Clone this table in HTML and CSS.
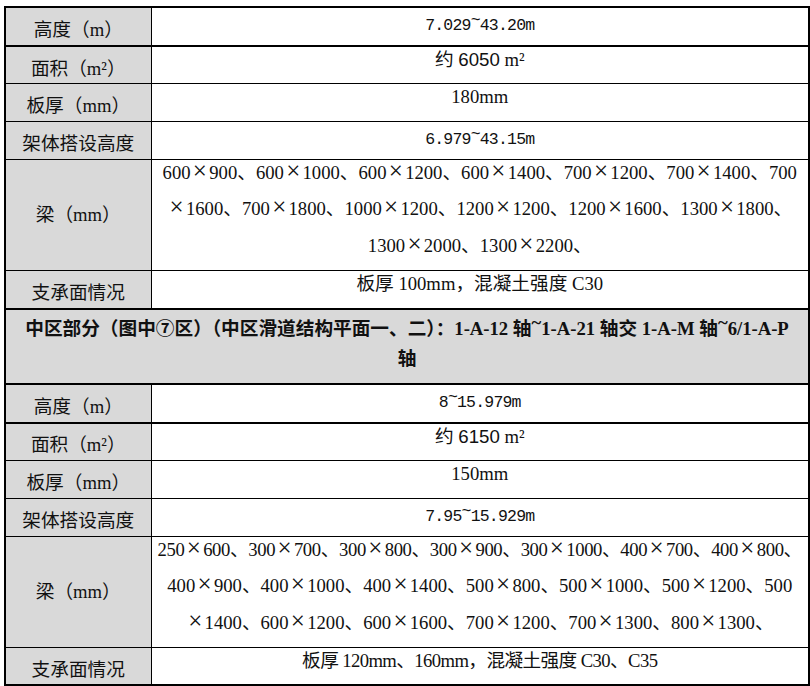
FILE: index.html
```html
<!DOCTYPE html>
<html lang="zh-CN">
<head>
<meta charset="utf-8">
<title>中区部分参数表</title>
<link rel="stylesheet" href="styles.css">
</head>
<body>
<div class="page">
<table class="spec">
  <colgroup><col class="c-label"><col class="c-value"></colgroup>
  <tr class="thick">
    <th class="label">高度（m）</th>
    <td class="value"><span class="line"><span class="mono">7.029<span class="tl">~</span>43.20m</span></span></td>
  </tr>
  <tr>
    <th class="label">面积（m²）</th>
    <td class="value"><span class="line">约 <span class="sans">6050</span> m²</span></td>
  </tr>
  <tr>
    <th class="label">板厚（mm）</th>
    <td class="value"><span class="line">180mm</span></td>
  </tr>
  <tr>
    <th class="label">架体搭设高度</th>
    <td class="value"><span class="line"><span class="mono">6.979<span class="tl">~</span>43.15m</span></span></td>
  </tr>
  <tr>
    <th class="label label-tall">梁（mm）</th>
    <td class="value">
      <span class="line">600<span class="x">×</span>900、600<span class="x">×</span>1000、600<span class="x">×</span>1200、600<span class="x">×</span>1400、700<span class="x">×</span>1200、700<span class="x">×</span>1400、700</span>
      <span class="line"><span class="x">×</span>1600、700<span class="x">×</span>1800、1000<span class="x">×</span>1200、1200<span class="x">×</span>1200、1200<span class="x">×</span>1600、1300<span class="x">×</span>1800、</span>
      <span class="line">1300<span class="x">×</span>2000、1300<span class="x">×</span>2200、</span>
    </td>
  </tr>
  <tr class="thick">
    <th class="label">支承面情况</th>
    <td class="value"><span class="line">板厚 100mm，混凝土强度 C30</span></td>
  </tr>
  <tr class="thick">
    <td class="section" colspan="2">
      <span class="line">中区部分（图中⑦区）（中区滑道结构平面一、二）：1-A-12 轴<span class="tl">~</span>1-A-21 轴交 1-A-M 轴<span class="tl">~</span>6/1-A-P</span>
      <span class="line">轴</span>
    </td>
  </tr>
  <tr class="thick">
    <th class="label">高度（m）</th>
    <td class="value"><span class="line"><span class="mono">8<span class="tl">~</span>15.979m</span></span></td>
  </tr>
  <tr>
    <th class="label">面积（m²）</th>
    <td class="value"><span class="line">约 <span class="sans">6150</span> m²</span></td>
  </tr>
  <tr>
    <th class="label">板厚（mm）</th>
    <td class="value"><span class="line">150mm</span></td>
  </tr>
  <tr>
    <th class="label">架体搭设高度</th>
    <td class="value"><span class="line"><span class="mono">7.95<span class="tl">~</span>15.929m</span></span></td>
  </tr>
  <tr>
    <th class="label label-tall">梁（mm）</th>
    <td class="value">
      <span class="line line-tight">250<span class="x">×</span>600、300<span class="x">×</span>700、300<span class="x">×</span>800、300<span class="x">×</span>900、300<span class="x">×</span>1000、400<span class="x">×</span>700、400<span class="x">×</span>800、</span>
      <span class="line">400<span class="x">×</span>900、400<span class="x">×</span>1000、400<span class="x">×</span>1400、500<span class="x">×</span>800、500<span class="x">×</span>1000、500<span class="x">×</span>1200、500</span>
      <span class="line"><span class="x">×</span>1400、600<span class="x">×</span>1200、600<span class="x">×</span>1600、700<span class="x">×</span>1200、700<span class="x">×</span>1300、800<span class="x">×</span>1300、</span>
    </td>
  </tr>
  <tr>
    <th class="label">支承面情况</th>
    <td class="value"><span class="line line-narrow">板厚 120mm、160mm，混凝土强度 C30、C35</span></td>
  </tr>
</table>
</div>
</body>
</html>
```
FILE: styles.css
```css
html, body {
  margin: 0;
  padding: 0;
  background: #ffffff;
}

.page {
  padding: 6px 0 0 4px;
}

.spec {
  border-collapse: collapse;
  width: 804px;
  table-layout: fixed;
  border: 2px solid #000;
  font-family: "Liberation Serif", "Noto Sans CJK SC", serif;
  font-size: 18.67px;
  color: #111;
}

.c-label { width: 146px; }
.c-value { width: 658px; }

.spec th,
.spec td {
  border: 1px solid #000;
  padding: 0;
}

.spec tr.thick > th,
.spec tr.thick > td {
  border-bottom-width: 2px;
}

.label {
  background: #d9d9d9;
  font-weight: normal;
  text-align: center;
  vertical-align: middle;
  padding-top: 7px !important;
  white-space: nowrap;
  line-height: 24px;
}

.label-tall {
  padding-top: 0 !important;
}

.value {
  vertical-align: top;
  text-align: center;
  background: #fff;
}

.section {
  background: #d9d9d9;
  font-weight: bold;
  text-align: center;
  vertical-align: top;
}

.line {
  display: block;
  height: 36.7px;
  line-height: 25px;
  white-space: nowrap;
}

.line-tight {
  letter-spacing: -0.36px;
}

.line-narrow {
  letter-spacing: -0.6px;
}

.x {
  display: inline-block;
  width: 18.67px;
  font-size: 25px;
  line-height: 20px;
  text-align: center;
  letter-spacing: 0;
}

.mono {
  font-family: "Liberation Mono", "Noto Sans CJK SC", monospace;
  font-size: 16.5px;
  letter-spacing: -0.8px;
}

.sans {
  font-family: "Liberation Sans", sans-serif;
}

.tl {
  vertical-align: 0.3em;
}
```
